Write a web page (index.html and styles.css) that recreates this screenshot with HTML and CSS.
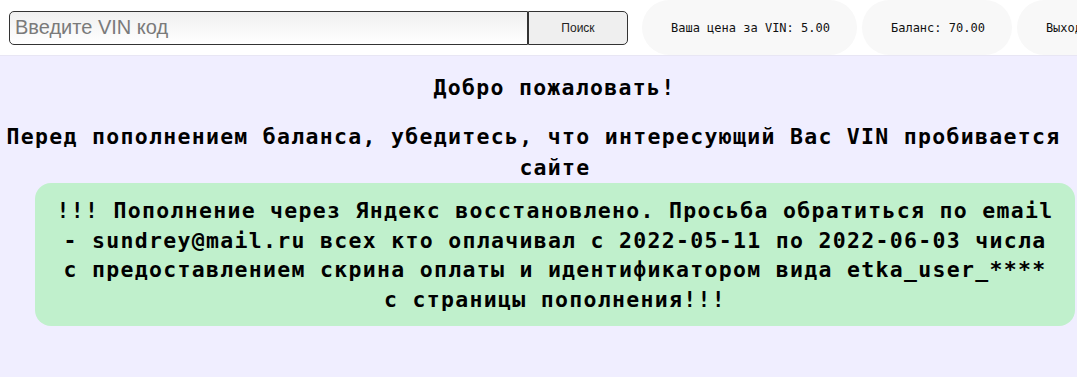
FILE: index.html
```html
<!DOCTYPE html>
<html lang="ru">
<head>
    <meta charset="UTF-8">
    <meta name="viewport" content="width=device-width, initial-scale=1.0">
    <title>Поиск по VIN</title>
    <link rel="stylesheet" href="styles.css">
</head>
<body>
    <div class="topbar">
        <form class="search" onsubmit="return false;">
            <input class="vin-input" type="text" name="vin" placeholder="Введите VIN код">
            <button class="vin-button" type="submit">Поиск</button>
        </form>
        <div class="pill">Ваша цена за VIN: 5.00</div>
        <div class="pill">Баланс: 70.00</div>
        <div class="pill">Выход</div>
    </div>

    <div class="content">
        <h2 class="welcome">Добро пожаловать!</h2>
        <h2 class="notice">Перед пополнением баланса, убедитесь, что интересующий Вас VIN пробивается <span class="tail">сайте</span></h2>
        <div class="alert">
            !!! Пополнение через Яндекс восстановлено. Просьба обратиться по email - sundrey@mail.ru всех кто оплачивал с 2022-05-11 по 2022-06-03 числа с предоставлением скрина оплаты и идентификатором вида etka_user_**** с страницы пополнения!!!
        </div>
    </div>
</body>
</html>
```

FILE: styles.css
```css
body {
    margin: 0;
    background-color: #f0eeff;
    font-family: "DejaVu Sans Mono", monospace;
    color: #000;
    overflow: hidden;
}
.topbar {
    display: flex;
    align-items: center;
    height: 55px;
    background-color: #fff;
    border-bottom: 1px solid #e8e6f4;
    white-space: nowrap;
    overflow: hidden;
}
.search {
    display: flex;
    flex-shrink: 0;
    margin-left: 9px;
    margin-right: 14px;
}
.vin-input {
    box-sizing: border-box;
    width: 519px;
    height: 34px;
    padding: 0 5px;
    border: 1px solid #333;
    border-radius: 5px 0 0 5px;
    background: linear-gradient(#efefef, #fff);
    font-family: "Liberation Sans", Arial, sans-serif;
    font-size: 20px;
    outline: none;
}
.vin-input::placeholder {
    color: #7a7a7a;
}
.vin-button {
    box-sizing: border-box;
    width: 100px;
    height: 34px;
    border: 1px solid #333;
    border-radius: 0 5px 5px 0;
    background-color: #efefef;
    font-family: "Liberation Sans", Arial, sans-serif;
    font-size: 12px;
    color: #222;
    cursor: pointer;
}
.pill {
    flex-shrink: 0;
    display: flex;
    align-items: center;
    height: 55px;
    padding: 0 27px 0 29px;
    margin-right: 5px;
    border-radius: 28px;
    background-color: #f8f8f8;
    font-size: 12px;
    color: #111;
}
.content {
    text-align: center;
}
.welcome {
    margin: 17px 0 0;
    padding-left: 32px;
    font-size: 21.5px;
    line-height: 30px;
    letter-spacing: 1.3px;
}
.notice {
    margin: 18px 10px 0 0;
    font-size: 21.5px;
    line-height: 31px;
    letter-spacing: 1.3px;
}
.tail {
    margin-left: 43px;
}
.alert {
    margin: 0 2px 0 35px;
    padding: 13px 16px 12px;
    border-radius: 16px;
    background-color: #c0f0cc;
    font-size: 21.5px;
    font-weight: bold;
    line-height: 29.5px;
    letter-spacing: 1.3px;
}
```
